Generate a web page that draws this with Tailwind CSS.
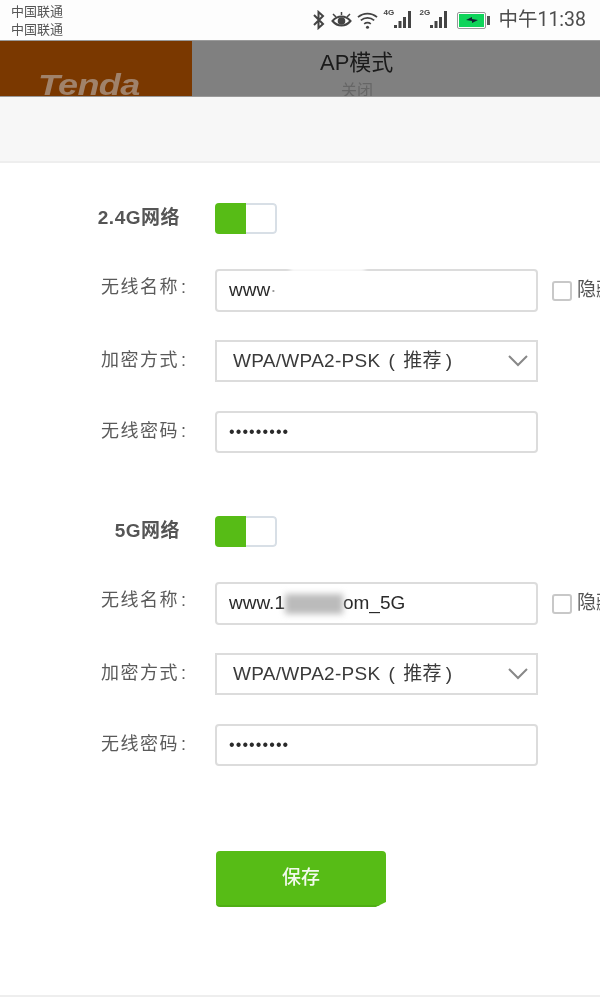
<!DOCTYPE html>
<html lang="zh-CN">
<head>
    <meta charset="UTF-8">
    <meta name="viewport" content="width=device-width, initial-scale=1.0">
    <script src="https://cdn.jsdelivr.net/npm/@tailwindcss/browser@4"></script>
    <title>AP模式</title>
</head>
<body class="bg-white">
    <div class="w-[600px] h-[1000px] overflow-hidden bg-white font-['Liberation_Sans','Noto_Sans_CJK_SC',sans-serif] blur-[0.4px]">

        <!-- status bar -->
        <div class="flex h-[40px] items-center justify-between pl-[11px] pr-[14px] bg-[#fdfdfd]">
            <div class="text-[13px] leading-[18px] text-[#555] pt-[2px]">
                <div>中国联通</div>
                <div>中国联通</div>
            </div>
            <div class="flex items-center text-[#444]">
                <svg class="w-[14px] h-[20px]" viewBox="0 0 14 20" fill="none" stroke="#444" stroke-width="2"><path d="M2 5l9 9-4.500 4V2L11 6l-9 9"/></svg>
                <svg class="ml-[5px] w-[21px] h-[20px]" viewBox="0 0 21 20" fill="none" stroke="#444" stroke-width="2"><path d="M1.500 11c5-6 13-6 18 0-5 6-13 6-18 0z"/><circle cx="10.500" cy="11" r="2.800" fill="#444"/><path d="M2 4l3 3M19 4l-3 3M10.500 2v3" stroke-width="1.500"/></svg>
                <svg class="ml-[5px] w-[21px] h-[20px]" viewBox="0 0 22 20" fill="none" stroke="#444" stroke-width="1.800"><path d="M1 7c6-5 14-5 20 0M4 10.500c4-3.500 10-3.500 14 0M7.500 14c2-1.500 5-1.500 7 0"/><circle cx="11" cy="17.500" r="1.600" fill="#444" stroke="none"/></svg>
                <div class="ml-[5px] relative w-[30px] h-[20px]">
                    <span class="absolute left-0 top-[-1px] text-[8px] font-bold leading-none">4G</span>
                    <svg class="absolute inset-0" viewBox="0 0 30 20" fill="#444"><rect x="11" y="15" width="3" height="3"/><rect x="15.500" y="11" width="3" height="7"/><rect x="20" y="7" width="3" height="11"/><rect x="25" y="1" width="3" height="17"/></svg>
                </div>
                <div class="ml-[6px] relative w-[30px] h-[20px]">
                    <span class="absolute left-0 top-[-1px] text-[8px] font-bold leading-none">2G</span>
                    <svg class="absolute inset-0" viewBox="0 0 30 20" fill="#444"><rect x="11" y="15" width="3" height="3"/><rect x="15.500" y="11" width="3" height="7"/><rect x="20" y="7" width="3" height="11"/><rect x="25" y="1" width="3" height="17"/></svg>
                </div>
                <div class="ml-[8px] flex items-center">
                    <div class="flex items-center justify-center w-[29px] h-[17px] rounded-[2px] border-[1.500px] border-[#999] bg-white p-[1px]">
                        <div class="flex items-center justify-center w-full h-full bg-[#0fd45a]">
                            <svg class="w-[12px] h-[6px]" viewBox="0 0 12 6" fill="#123"><path d="M0 3l6-3v2l6 1-6 3V4z"/></svg>
                        </div>
                    </div>
                    <div class="w-[3px] h-[9px] ml-[1px] bg-[#555]"></div>
                </div>
                <div class="ml-[8px] text-[19.500px] leading-none text-[#4d4d4d] font-['Roboto','Noto_Sans_CJK_SC',sans-serif]">中午11:38</div>
            </div>
        </div>

        <!-- header under a dark overlay -->
        <div class="flex h-[57px] border-y border-[#9a9a9a] overflow-hidden">
            <div class="relative w-[192px] bg-[#7a3800] overflow-hidden">
                <span class="absolute left-[38px] top-[24px] origin-left scale-x-[1.2] text-[30px] leading-[40px] font-bold italic tracking-[-0.5px] text-[#a0826a]">Tenda</span>
            </div>
            <div class="flex-1 bg-[#808080] relative overflow-hidden">
                <div class="absolute left-[128px] top-[10px] text-[22px] leading-[24px] text-[#1a1a1a]">AP模式</div>
                <div class="absolute left-[149px] top-[41px] text-[16px] leading-[18px] text-[#666]">关闭</div>
            </div>
        </div>

        <!-- sub band -->
        <div class="h-[66px] bg-[#f7f7f7] border-b-2 border-[#eeeeee]"></div>

        <!-- form -->
        <div class="pt-[40px] w-[640px]">
            <!-- 2.4G -->
            <div class="flex items-center h-[31px]">
                <div class="w-[180px] shrink-0 text-right text-[19px] tracking-[0.5px] font-bold text-[#555]">2.4G网络</div>
                <div class="ml-[35px] shrink-0 flex w-[62px] h-[31px] rounded-[4px] overflow-hidden bg-white">
                    <div class="w-[31px] bg-[#57bc16]"></div>
                    <div class="flex-1 border-2 border-l-0 border-[#d8dfe6] rounded-r-[4px]"></div>
                </div>
            </div>

            <div class="flex items-center h-[43px] mt-[35px] relative">
                <div class="w-[186px] shrink-0 pb-[6px] text-right text-[18px] tracking-[1.500px] text-[#5a5a5a]">无线名称<span class="ml-[2px] tracking-normal">:</span></div>
                <div class="ml-[29px] shrink-0 flex items-center w-[323px] h-[43px] pl-[12px] rounded-[4px] border-2 border-[#dcdcdc] text-[19px] text-[#2a2a2a] bg-white">www<span class="text-[#999]">·</span></div>
                <div class="absolute left-[290px] top-[-3px] w-[75px] h-[6px] bg-white blur-[2px]"></div>
                <div class="ml-[14px] shrink-0 w-[20px] h-[20px] rounded-[3px] border-2 border-[#c8c8c8]"></div>
                <div class="ml-[5px] shrink-0 text-[19px] text-[#555] whitespace-nowrap">隐藏</div>
            </div>

            <div class="flex items-center h-[42px] mt-[28px]">
                <div class="w-[186px] shrink-0 pb-[2px] text-right text-[18px] tracking-[1.500px] text-[#5a5a5a]">加密方式<span class="ml-[2px] tracking-normal">:</span></div>
                <div class="ml-[29px] shrink-0 flex items-center justify-between w-[323px] h-[42px] pl-[16px] pr-[7px] border-2 border-[#dcdcdc] text-[19px] tracking-[0.3px] text-[#3a3a3a] bg-white">
                    <span>WPA/WPA2-PSK<span class="ml-[8px]">(</span><span class="ml-[8px] mr-[4px]">推荐</span>)</span>
                    <svg class="w-[22px] h-[14px]" viewBox="0 0 22 14" fill="none" stroke="#888" stroke-width="2"><path d="M2 2l9 9 9-9"/></svg>
                </div>
            </div>

            <div class="flex items-center h-[42px] mt-[29px]">
                <div class="w-[186px] shrink-0 pb-[2px] text-right text-[18px] tracking-[1.500px] text-[#5a5a5a]">无线密码<span class="ml-[2px] tracking-normal">:</span></div>
                <div class="ml-[29px] shrink-0 flex items-center w-[323px] h-[42px] pl-[12px] rounded-[4px] border-2 border-[#dcdcdc] text-[16px] tracking-[1.100px] text-[#2a2a2a] bg-white">•••••••••</div>
            </div>

            <!-- 5G -->
            <div class="flex items-center h-[31px] mt-[63px]">
                <div class="w-[180px] shrink-0 text-right text-[19px] tracking-[0.5px] font-bold text-[#555]">5G网络</div>
                <div class="ml-[35px] shrink-0 flex w-[62px] h-[31px] rounded-[4px] overflow-hidden bg-white">
                    <div class="w-[31px] bg-[#57bc16]"></div>
                    <div class="flex-1 border-2 border-l-0 border-[#d8dfe6] rounded-r-[4px]"></div>
                </div>
            </div>

            <div class="flex items-center h-[43px] mt-[35px]">
                <div class="w-[186px] shrink-0 pb-[6px] text-right text-[18px] tracking-[1.500px] text-[#5a5a5a]">无线名称<span class="ml-[2px] tracking-normal">:</span></div>
                <div class="ml-[29px] shrink-0 flex items-center w-[323px] h-[43px] pl-[12px] rounded-[4px] border-2 border-[#dcdcdc] text-[19px] text-[#2a2a2a] bg-white">www.1<span class="inline-block w-[58px] h-[20px] bg-[#bbb] blur-[3px]"></span>om_5G</div>
                <div class="ml-[14px] shrink-0 w-[20px] h-[20px] rounded-[3px] border-2 border-[#c8c8c8]"></div>
                <div class="ml-[5px] shrink-0 text-[19px] text-[#555] whitespace-nowrap">隐藏</div>
            </div>

            <div class="flex items-center h-[42px] mt-[28px]">
                <div class="w-[186px] shrink-0 pb-[2px] text-right text-[18px] tracking-[1.500px] text-[#5a5a5a]">加密方式<span class="ml-[2px] tracking-normal">:</span></div>
                <div class="ml-[29px] shrink-0 flex items-center justify-between w-[323px] h-[42px] pl-[16px] pr-[7px] border-2 border-[#dcdcdc] text-[19px] tracking-[0.3px] text-[#3a3a3a] bg-white">
                    <span>WPA/WPA2-PSK<span class="ml-[8px]">(</span><span class="ml-[8px] mr-[4px]">推荐</span>)</span>
                    <svg class="w-[22px] h-[14px]" viewBox="0 0 22 14" fill="none" stroke="#888" stroke-width="2"><path d="M2 2l9 9 9-9"/></svg>
                </div>
            </div>

            <div class="flex items-center h-[42px] mt-[29px]">
                <div class="w-[186px] shrink-0 pb-[2px] text-right text-[18px] tracking-[1.500px] text-[#5a5a5a]">无线密码<span class="ml-[2px] tracking-normal">:</span></div>
                <div class="ml-[29px] shrink-0 flex items-center w-[323px] h-[42px] pl-[12px] rounded-[4px] border-2 border-[#dcdcdc] text-[16px] tracking-[1.100px] text-[#2a2a2a] bg-white">•••••••••</div>
            </div>

            <!-- save -->
            <div class="ml-[216px] mt-[85px] flex items-center justify-center w-[170px] h-[56px] rounded-[4px] bg-[#57bc16] border-b-2 border-[#4fae14] text-[19px] font-medium text-[#f2faec] [clip-path:polygon(0_0,100%_0,100%_91%,94%_100%,0_100%)]">保存</div>
        </div>

        <div class="mt-[88px] h-[2px] bg-[#eeeeee]"></div>
    </div>
</body>
</html>
